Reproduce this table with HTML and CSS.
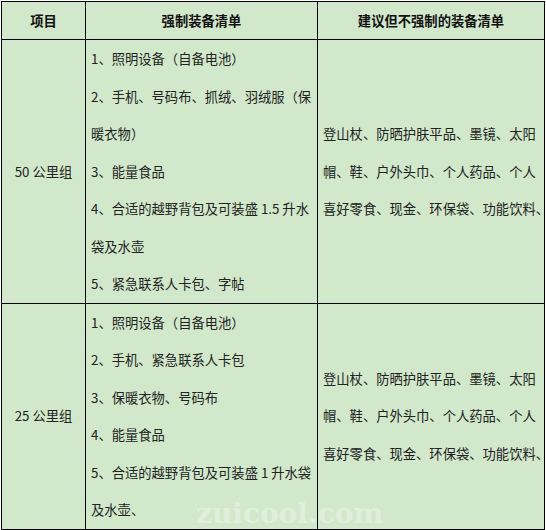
FILE: index.html
```html
<!DOCTYPE html>
<html lang="zh">
<head>
<meta charset="utf-8">
<link rel="stylesheet" href="styles.css">
</head>
<body>
<div class="page">
<table class="gear">
  <colgroup>
    <col class="c1">
    <col class="c2">
    <col class="c3">
  </colgroup>
  <thead>
    <tr>
      <th>项目</th>
      <th>强制装备清单</th>
      <th>建议但不强制的装备清单</th>
    </tr>
  </thead>
  <tbody>
    <tr>
      <td class="group">50 公里组</td>
      <td class="list">
        <p>1、照明设备（自备电池）</p>
        <p>2、手机、号码布、抓绒、羽绒服（保暖衣物）</p>
        <p>3、能量食品</p>
        <p>4、合适的越野背包及可装盛 1.5 升水袋及水壶</p>
        <p>5、紧急联系人卡包、字帖</p>
      </td>
      <td class="opt">登山杖、防晒护肤平品、墨镜、太阳帽、鞋、户外头巾、个人药品、个人喜好零食、现金、环保袋、功能饮料<span class="hang">、</span></td>
    </tr>
    <tr>
      <td class="group">25 公里组</td>
      <td class="list">
        <p>1、照明设备（自备电池）</p>
        <p>2、手机、紧急联系人卡包</p>
        <p>3、保暖衣物、号码布</p>
        <p>4、能量食品</p>
        <p>5、合适的越野背包及可装盛 1 升水袋及水壶、</p>
      </td>
      <td class="opt">登山杖、防晒护肤平品、墨镜、太阳帽、鞋、户外头巾、个人药品、个人喜好零食、现金、环保袋、功能饮料<span class="hang">、</span></td>
    </tr>
  </tbody>
</table>
<div class="watermark">zuicool.com</div>
</div>
</body>
</html>
```

FILE: styles.css
```css
html, body {
  margin: 0;
  padding: 0;
  background: #ffffff;
}
.page {
  position: relative;
  width: 546px;
  height: 530px;
  background: #ffffff;
}
.gear {
  position: relative;
  margin: 1px 0 0 1px;
  width: 543px;
  border-collapse: collapse;
  table-layout: fixed;
  background: #d1e8cb;
  font-family: "Microsoft YaHei", "Noto Sans CJK SC", sans-serif;
  font-size: 13.3px;
  color: #222;
}
.c1 { width: 84px; }
.c2 { width: 232px; }
.c3 { width: 227px; }
.gear th, .gear td {
  border: 1px solid #000;
  padding: 0 5px;
  vertical-align: middle;
}
.gear th {
  height: 37px;
  font-weight: bold;
  color: #111;
  text-align: center;
  line-height: 20px;
}
.gear td {
  line-height: 37.5px;
}
.gear td.group {
  text-align: center;
}
.gear td.list {
  padding-left: 5px;
  padding-right: 4px;
}
.gear td.list p {
  margin: 0;
}
.gear td.opt {
  padding-left: 5px;
  padding-right: 0;
}
.hang {
  letter-spacing: -7px;
}
.watermark {
  position: absolute;
  left: 196px;
  top: 496px;
  font-family: "DejaVu Serif", "Liberation Serif", serif;
  font-weight: bold;
  font-size: 28px;
  color: rgba(255, 255, 255, 0.35);
  pointer-events: none;
}
```
